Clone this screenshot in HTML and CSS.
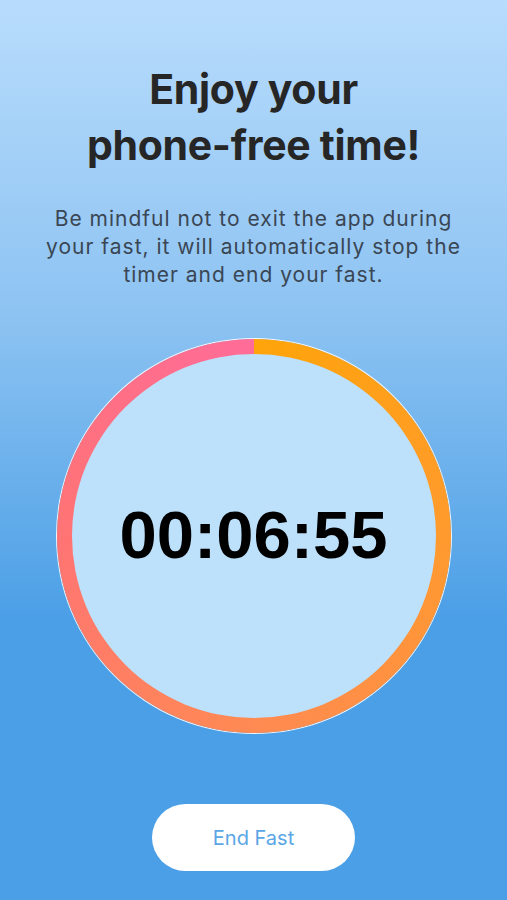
FILE: index.html
```html
<!DOCTYPE html>
<html lang="en">
<head>
<meta charset="utf-8">
<link rel="stylesheet" href="styles.css">
</head>
<body>
<div class="screen">
  <h1 class="title">Enjoy your<br>phone-free time!</h1>
  <p class="note">Be mindful not to exit the app during your fast, it will automatically stop the timer and end your fast.</p>
  <div class="ring">
    <div class="ring-inner">
      <span class="timer">00:06:55</span>
    </div>
  </div>
  <button class="end-button" type="button">End Fast</button>
</div>
</body>
</html>
```

FILE: styles.css
```css
html, body {
  margin: 0;
  padding: 0;
}

.screen {
  height: 900px;
  display: flex;
  flex-direction: column;
  align-items: center;
  background: linear-gradient(180deg, #b8dcfc 0%, #8dc3f2 35%, #4b9fe6 69%, #4a9fe6 100%);
  font-family: Inter, "Noto Sans", sans-serif;
  box-sizing: border-box;
  padding-top: 61px;
}

.title {
  margin: 0;
  text-align: center;
  font-size: 41px;
  line-height: 56px;
  font-weight: 700;
  color: #262626;
  letter-spacing: -0.3px;
}

.note {
  margin: 32px 0 0;
  width: 440px;
  text-align: center;
  font-size: 21px;
  line-height: 28px;
  letter-spacing: 1px;
  color: #3a4654;
}

.ring {
  margin-top: 50px;
  width: 394px;
  height: 394px;
  box-sizing: border-box;
  border-radius: 50%;
  padding: 15px;
  background: conic-gradient(#ffa40a 0deg, #ff9a2e 90deg, #ff8a52 180deg, #ff7474 270deg, #ff6c98 359deg);
  box-shadow: 0 0 0 1px rgba(255, 255, 255, 0.9);
  display: flex;
}

.ring-inner {
  flex: 1;
  border-radius: 50%;
  background: #bde1fb;
  display: flex;
  align-items: center;
  justify-content: center;
}

.timer {
  font-family: "Liberation Sans", Arial, sans-serif;
  font-weight: 700;
  font-size: 67px;
  color: #000;
  margin-top: -4px;
}

.end-button {
  margin-top: 71px;
  width: 203px;
  height: 67px;
  border: none;
  border-radius: 34px;
  background: #fff;
  color: #5aa6e6;
  font-family: Inter, "Noto Sans", sans-serif;
  font-size: 20px;
}
```
